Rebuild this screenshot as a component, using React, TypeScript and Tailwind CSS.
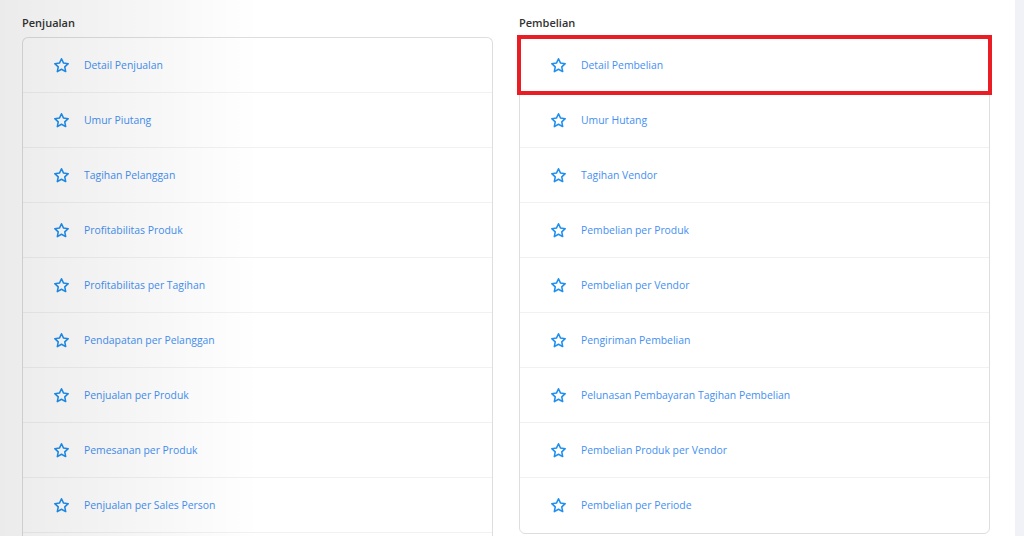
import React from "react";

const left = [
  "Detail Penjualan",
  "Umur Piutang",
  "Tagihan Pelanggan",
  "Profitabilitas Produk",
  "Profitabilitas per Tagihan",
  "Pendapatan per Pelanggan",
  "Penjualan per Produk",
  "Pemesanan per Produk",
  "Penjualan per Sales Person",
];
const right = [
  "Detail Pembelian",
  "Umur Hutang",
  "Tagihan Vendor",
  "Pembelian per Produk",
  "Pembelian per Vendor",
  "Pengiriman Pembelian",
  "Pelunasan Pembayaran Tagihan Pembelian",
  "Pembelian Produk per Vendor",
  "Pembelian per Periode",
];

function Star() {
  return (
    <svg width="17" height="17" viewBox="0 0 24 24" fill="none" stroke="#1f8ff0" strokeWidth="2.2" strokeLinejoin="round" strokeLinecap="round">
      <path d="M12 2.5l2.9 6.1 6.6.8-4.9 4.6 1.3 6.6L12 17.3l-5.9 3.3 1.3-6.6-4.9-4.6 6.6-.8z" />
    </svg>
  );
}

function Row({ label, last }: { label: string; last: boolean }) {
  return (
    <div className={"flex items-center h-[55px] pl-[30px] gap-[14px] " + (last ? "" : "border-b border-[#f1f1f1]")}>
      <Star />
      <span className="text-[10.4px] text-[#448ff2] pt-[1px]">{label}</span>
    </div>
  );
}

function Column({ title, items, highlight, open }: { title: string; items: string[]; highlight?: boolean; open?: boolean }) {
  return (
    <div className="flex flex-col w-[471px]">
      <div className="text-[11px] font-semibold text-[#333] h-[22px] leading-[16px] pt-[6px] mt-[9px] mb-[6px]">{title}</div>
      <div className={"relative bg-white border border-[#dedede] " + (open ? "rounded-t-[6px] border-b-0" : "rounded-[6px]")}>
        {items.map((t, i) => (
          <Row key={t} label={t} last={!open && i === items.length - 1} />
        ))}
        {open && <div className="h-[20px]" />}
        {highlight && (
          <div className="absolute left-[-3px] top-[-3px] w-[475px] h-[60px] border-[4px] border-[#ea1c24]" />
        )}
      </div>
    </div>
  );
}

export default function App() {
  return (
    <div className="relative w-[1024px] h-[536px] overflow-hidden bg-white flex" style={{ fontFamily: '"Open Sans", "Noto Sans", sans-serif' }}>
      <div className="flex-1 flex gap-[26px] pl-[22px]">
        <Column title="Penjualan" items={left} open />
        <Column title="Pembelian" items={right} highlight />
      </div>
      <div className="w-[9px] bg-[#f1f2f7]" />
      <div className="pointer-events-none absolute left-0 top-0 h-full w-[260px] bg-gradient-to-r from-[rgba(0,0,0,0.08)] to-transparent" />
    </div>
  );
}
